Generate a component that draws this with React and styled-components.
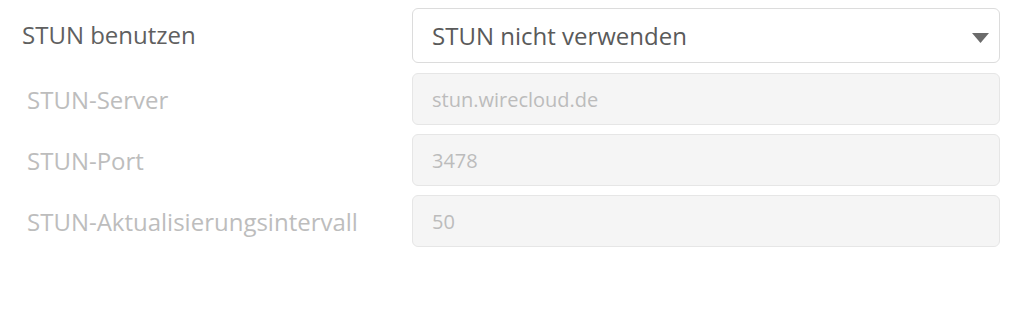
import React from "react";
import styled, { createGlobalStyle } from "styled-components";

const Global = createGlobalStyle`
  html, body { margin: 0; padding: 0; background: #fff; }
  body { font-family: "Open Sans", "Noto Sans", sans-serif; }
`;

const Form = styled.div`
  display: grid;
  grid-template-columns: 412px 588px;
  grid-template-rows: 56px repeat(3, 52px);
  row-gap: 9px;
  padding-top: 8px;
`;

const Label = styled.label`
  display: flex;
  align-items: center;
  padding-left: ${(p) => (p.$disabled ? "27px" : "22px")};
  padding-bottom: ${(p) => (p.$disabled ? "0" : "3px")};
  font-size: 24px;
  color: ${(p) => (p.$disabled ? "#bdbdbd" : "#606060")};
  white-space: nowrap;
`;

const SelectBox = styled.div`
  position: relative;
  box-sizing: border-box;
  height: 55px;
  display: flex;
  align-items: center;
  padding-left: 19px;
  border: 1px solid #dcdcdc;
  border-radius: 6px;
  background: #fff;
  font-size: 24px;
  color: #5a5a5a;
`;

const Arrow = styled.svg`
  position: absolute;
  right: 10px;
  top: 24px;
`;

const Input = styled.div`
  box-sizing: border-box;
  height: 52px;
  display: flex;
  align-items: center;
  padding-left: 19px;
  border: 1px solid #e6e6e6;
  border-radius: 6px;
  background: #f5f5f5;
  font-size: 20px;
  color: #bcbcbc;
`;

const fields = [
  ["STUN-Server", "stun.wirecloud.de"],
  ["STUN-Port", "3478"],
  ["STUN-Aktualisierungsintervall", "50"],
];

export default function App() {
  return (
    <>
      <Global />
      <Form>
        <Label>STUN benutzen</Label>
        <SelectBox>
          STUN nicht verwenden
          <Arrow width="17" height="10" viewBox="0 0 17 10">
            <path d="M0 0 H17 L8.5 10 Z" fill="#6b6b6b" />
          </Arrow>
        </SelectBox>
        {fields.map(([l, v]) => (
          <React.Fragment key={l}>
            <Label $disabled>{l}</Label>
            <Input>{v}</Input>
          </React.Fragment>
        ))}
      </Form>
    </>
  );
}
